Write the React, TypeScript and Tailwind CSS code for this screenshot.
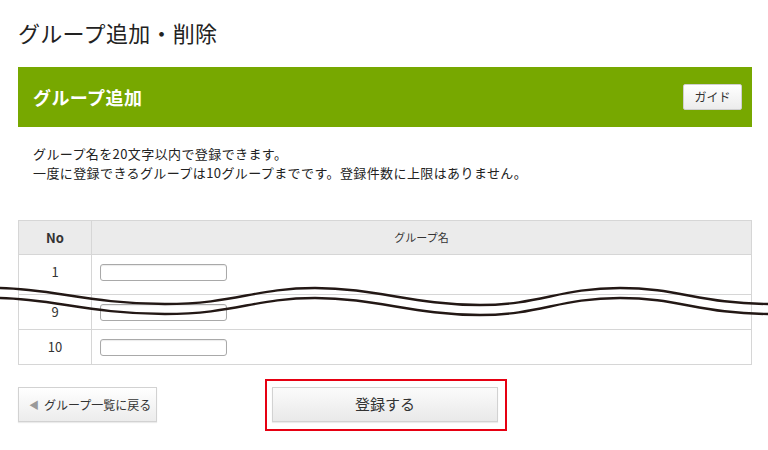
import React from "react";

const rows = [
  { no: "1", tall: true },
  { no: "9", tall: false },
  { no: "10", tall: false },
];

function Wave() {
  // 省略を示す波線（表の上に重ねる）
  const d =
    "M-4 8 C 50 8, 90 24, 165 24 C 235 24, 255 8, 315 8 C 375 8, 415 25, 480 25 C 540 25, 560 8, 620 8 C 680 8, 700 24, 772 24";
  return (
    <svg
      className="pointer-events-none absolute left-0 top-[280px]"
      width="768"
      height="40"
      viewBox="0 0 768 40"
      fill="none"
    >
      <path d={d} stroke="#231815" strokeWidth="2.4" />
      <path d={d} stroke="#231815" strokeWidth="2.4" transform="translate(0 10)" />
    </svg>
  );
}

export default function App() {
  return (
    <div
      className="relative w-full min-h-[450px] bg-white pl-[18px] pr-[16px] text-[#333]"
      style={{ fontFamily: '"Noto Sans CJK JP", "Noto Sans", sans-serif' }}
    >
      {/* タイトル */}
      <h1 className="pt-[18px] text-[22px] leading-[28px] font-normal tracking-[0.3px] text-[#222]">
        グループ追加・削除
      </h1>

      {/* 見出しバー */}
      <div className="mt-[21px] flex h-[60px] items-center justify-between bg-[#77a800] pl-[15px] pr-[10px]">
        <h2 className="text-[18px] font-bold leading-none tracking-[0.4px] text-white">
          グループ追加
        </h2>
        <button className="h-[26px] w-[59px] rounded-[2px] border border-[#cfcfcf] bg-gradient-to-b from-white to-[#ececec] text-[12px] leading-none text-[#333]">
          ガイド
        </button>
      </div>

      {/* 説明 */}
      <div className="mt-[17px] pl-[15px] text-[13px] leading-[19px] tracking-[0.4px] text-[#222]">
        <p>グループ名を20文字以内で登録できます。</p>
        <p>一度に登録できるグループは10グループまでです。登録件数に上限はありません。</p>
      </div>

      {/* 表 */}
      <table className="mt-[38px] w-full border-collapse text-[13px]">
        <thead>
          <tr className="h-[34px] bg-[#ebebeb]">
            <th className="w-[73px] border border-[#d6d6d6] text-[13px] font-bold">
              No
            </th>
            <th className="border border-[#d6d6d6] text-[11px] font-normal">
              グループ名
            </th>
          </tr>
        </thead>
        <tbody>
          {rows.map((r) => (
            <tr key={r.no} className={r.tall ? "h-[40px]" : "h-[35px]"}>
              <td
                className={
                  "border border-[#d6d6d6] text-center align-middle " +
                  (r.tall ? "pb-[5px]" : "")
                }
              >
                {r.no}
              </td>
              <td
                className={
                  "border border-[#d6d6d6] pl-[8px] align-middle " +
                  (r.tall ? "pb-[5px]" : "")
                }
              >
                <input
                  type="text"
                  className="block h-[17px] w-[127px] rounded-[3px] border border-[#a9a9a9] bg-white shadow-[inset_0_1px_1px_rgba(0,0,0,0.08)]"
                />
              </td>
            </tr>
          ))}
        </tbody>
      </table>

      {/* ボタン */}
      <div className="mt-[22px] grid grid-cols-[1fr_auto_1fr] items-start">
        <div>
          <button className="flex h-[35px] w-[139px] items-center gap-[5px] border border-[#d2d2d2] bg-gradient-to-b from-white to-[#ececec] pl-[10px] text-[12px] text-[#333] shadow-[0_1px_1px_rgba(0,0,0,0.08)]">
            <span className="text-[10px] leading-none text-[#9a9a9a]">◀</span>
            グループ一覧に戻る
          </button>
        </div>
        <div className="relative">
          <button className="h-[35px] w-[226px] border border-[#d2d2d2] bg-gradient-to-b from-[#fbfbfb] to-[#e9e9e9] text-[15px] text-[#333] shadow-[0_1px_1px_rgba(0,0,0,0.08)]">
            登録する
          </button>
          <div className="pointer-events-none absolute -left-[7px] -top-[8px] h-[52px] w-[242px] border-2 border-[#e60012]" />
        </div>
        <div />
      </div>

      <Wave />
    </div>
  );
}
